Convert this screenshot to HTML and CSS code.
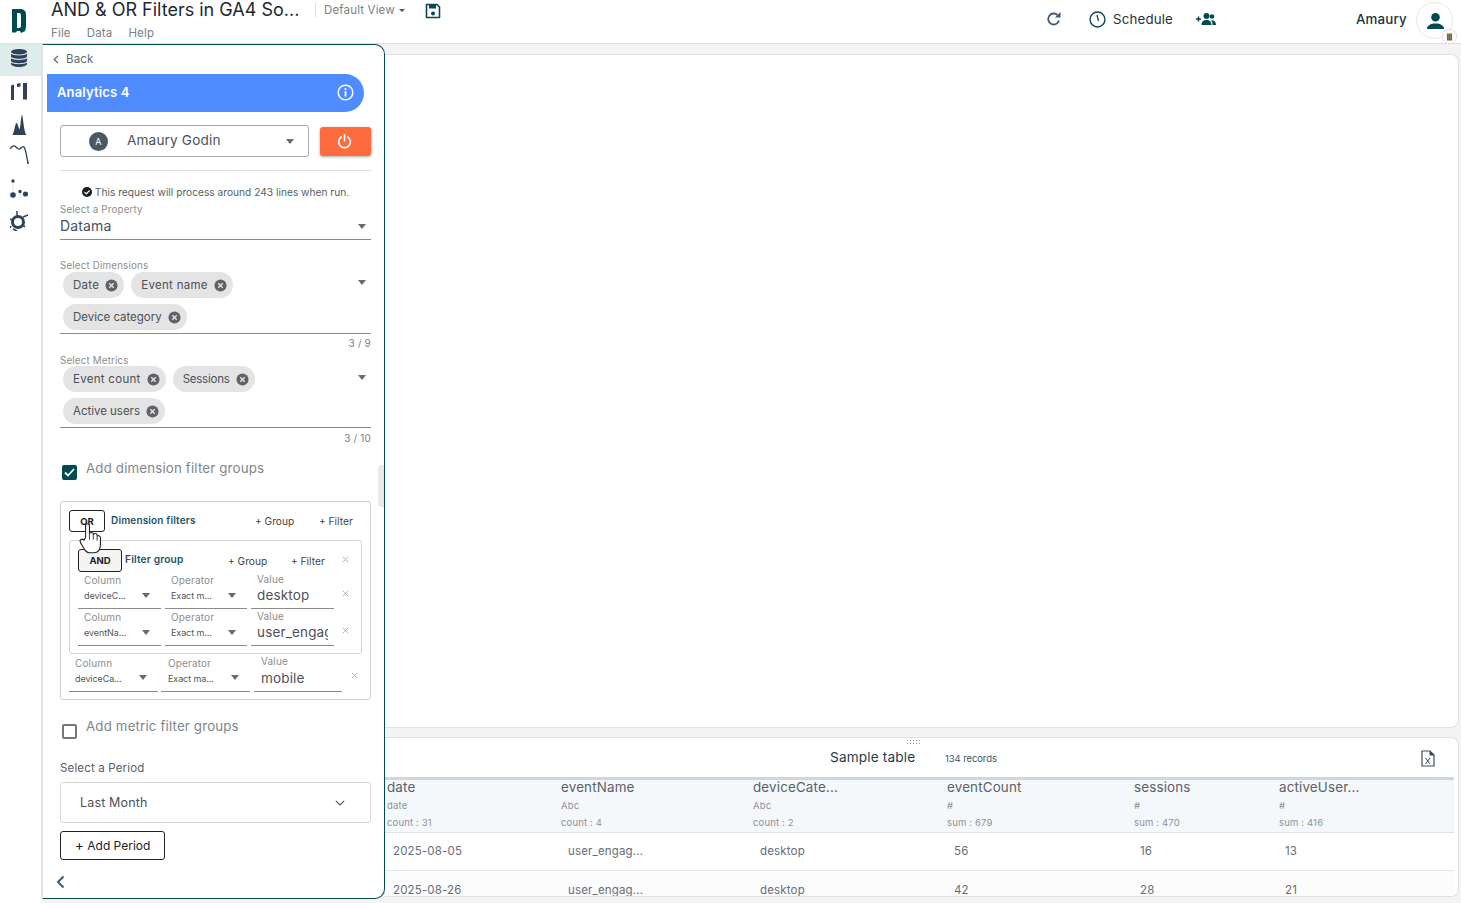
FILE: index.html
```html
<!DOCTYPE html>
<html lang="en">
<head>
<meta charset="utf-8">
<title>AND & OR Filters in GA4</title>
<link rel="stylesheet" href="styles.css">
</head>
<body>
<svg width="0" height="0" class="defs">
  <symbol id="chipx" viewBox="0 0 14 14"><circle cx="7" cy="7" r="6.5" fill="#5f6368"/><path d="M4.6 4.6l4.8 4.8M9.4 4.6l-4.8 4.8" stroke="#e4e4e4" stroke-width="1.5"/></symbol>
  <symbol id="closex" viewBox="0 0 8 8"><path d="M1 1l6 6M7 1l-6 6" stroke="#a8a8a8" stroke-width="1"/></symbol>
</svg>
<header class="topbar">
  <div class="logo-cell">
    <svg class="logo" viewBox="0 0 14 24"><path fill="#004b4f" d="M0 0h8c4 0 6 2 6 6v11c0 3-1 6-3 6l-2 1-1-2H5l-1 1.500H0zM5 4v15h2c1.500 0 2-1 2-2.500V6.500C9 5 8.500 4 7 4z"/></svg>
  </div>
  <div class="title-block">
    <div class="doc-title">AND &amp; OR Filters in GA4 So...</div>
    <nav class="menu"><span>File</span><span>Data</span><span>Help</span></nav>
  </div>
  <div class="view-switch">Default View <i class="mini-caret"></i></div>
  <svg class="save" viewBox="0 0 16 16"><path d="M1.500 1.500h10.500l2.500 2.500v10.500H1.500z" fill="#fff" stroke="#0f4358" stroke-width="1.600" stroke-linejoin="round"/><rect x="4" y="2" width="7" height="3.500" fill="#0f4358"/><circle cx="8" cy="10.500" r="2" fill="#0f4358"/></svg>
  <div class="actions">
    <svg class="refresh" viewBox="0 0 16 16"><path d="M13 9.500A5.500 5.500 0 1 1 11.500 4" fill="none" stroke="#3f5a72" stroke-width="1.800"/><path d="M9 6.500h5.500V1z" fill="#3f5a72"/></svg>
    <svg class="clock" viewBox="0 0 16 16"><circle cx="8" cy="8" r="7" fill="none" stroke="#0f4358" stroke-width="1.300"/><path d="M7.500 3.800l1.500 5.600" stroke="#0f4358" stroke-width="1.200" fill="none"/></svg>
    <span class="schedule">Schedule</span>
    <svg class="share" viewBox="0 0 20 14"><path d="M0 7h5M2.500 4.500v5" stroke="#004b4f" stroke-width="1.500"/><circle cx="10.500" cy="4" r="3" fill="#004b4f"/><circle cx="16" cy="4.500" r="2.300" fill="#004b4f"/><path d="M5.500 13c0-3.500 2-5 5-5s5 1.500 5 5zM16.500 13c0-2-.5-3.500-1.500-4.700 3-.3 5 1.200 5 4.700z" fill="#004b4f"/></svg>
    <span class="user-name">Amaury</span>
    <div class="avatar">
      <svg viewBox="0 0 20 20"><circle cx="10" cy="5.500" r="4.500" fill="#004b4f"/><path d="M1 18c0-4 4-6 9-6s9 2 9 6z" fill="#004b4f"/></svg>
      <span class="badge"><svg viewBox="0 0 8 8"><path d="M1 0h6v8H1z" fill="#5a6570"/><path d="M2 1.500h1.300M4.700 1.500H6M2 3.500h1.300M4.700 3.500H6M2 5.500h1.300M4.700 5.500H6" stroke="#e8b64c" stroke-width=".8"/></svg></span>
    </div>
  </div>
</header>

<div class="workspace">
  <aside class="rail">
    <div class="rail-cell active"><svg width="16" height="18" viewBox="0 0 16 18"><ellipse cx="8" cy="2.800" rx="8" ry="2.800" fill="#2f4257"/><path d="M0 4.800c2 2.300 14 2.300 16 0v2.700c-1 3-15 3-16 0zM0 9.300c2 2.300 14 2.300 16 0v2.700c-1 3-15 3-16 0zM0 13.400c2 2.300 14 2.300 16 0V15c-1 4-15 4-16 0z" fill="#2f4257"/></svg></div>
    <div class="rail-cell second-cell"><svg width="16" height="17" viewBox="0 0 16 17"><path d="M0 2.500l3-1V17H0zM6 .8L9.500 0v3.500L6 4zM12 0h4v16.500h-4z" fill="#2f4257"/></svg></div>
    <div class="rail-cell"><svg width="15" height="20" viewBox="0 0 15 20"><path d="M0 20C2 20 3 8 4.500 8S6.500 14 7.500 14 9 0 10 0s2 20 5 20z" fill="#2f4257"/></svg></div>
    <div class="rail-cell"><svg width="20" height="20" viewBox="0 0 20 20"><path d="M1 5C3 2 5 1 7 3s3 3 5 1 3-2 4 1 2 9 3 14" fill="none" stroke="#2f4257" stroke-width="1.300"/><circle cx="18.800" cy="19" r="1" fill="#2f4257"/></svg></div>
    <div class="rail-cell"><svg width="18" height="20" viewBox="0 0 18 20"><path d="M3 2v17M10 10v9" stroke="#d5dadf" stroke-width=".8"/><circle cx="3" cy="2" r="1.700" fill="#2f4257"/><circle cx="3" cy="16" r="2.800" fill="#2f4257"/><circle cx="10" cy="12.500" r="1.700" fill="#2f4257"/><circle cx="15.500" cy="15" r="2.600" fill="#2f4257"/></svg></div>
    <div class="rail-cell"><svg width="18" height="20" viewBox="0 0 18 20"><circle cx="8" cy="11" r="5.500" fill="none" stroke="#2f4257" stroke-width="3"/><path d="M7 0v5M13 6l5-2M1 15l-1 2M3 18l4 2M13 14l2 2M0 8l2 1" stroke="#2f4257" stroke-width="1.500"/></svg></div>
  </aside>

  <section class="panel">
    <div class="back"><svg width="6" height="9" viewBox="0 0 6 9"><path d="M5 .8L1.200 4.500 5 8.200" fill="none" stroke="#556" stroke-width="1.100"/></svg><span>Back</span></div>
    <div class="connector">
      <span>Analytics 4</span>
      <svg width="17" height="17" viewBox="0 0 17 17"><circle cx="8.500" cy="8.500" r="7.300" fill="none" stroke="#fff" stroke-width="1.500"/><path d="M7.600 7.300h1.800v5.200H7.600zM7.600 4.200h1.800V6H7.600z" fill="#fff"/></svg>
    </div>
    <div class="account-row">
      <div class="account">
        <span class="account-avatar">A</span>
        <span class="account-name">Amaury Godin</span>
        <i class="caret"></i>
      </div>
      <button class="power"><svg width="15" height="15" viewBox="0 0 14 14"><path d="M4 2.800a5.500 5.500 0 1 0 6 0" fill="none" stroke="#fff" stroke-width="1.600" stroke-linecap="round"/><path d="M7 .8v5.400" stroke="#fff" stroke-width="1.600" stroke-linecap="round"/></svg></button>
    </div>
    <hr class="rule">
    <p class="notice"><svg width="10" height="10" viewBox="0 0 10 10"><circle cx="5" cy="5" r="5" fill="#111d20"/><path d="M2.500 5l1.800 1.800 3.300-3.300" fill="none" stroke="#fff" stroke-width="1.200"/></svg> This request will process around 243 lines when run.</p>
    <div class="field property">
      <label>Select a Property</label>
      <div class="value-line">Datama<i class="caret"></i></div>
    </div>
    <div class="field multi dims">
      <label>Select Dimensions</label>
      <i class="caret"></i>
      <div class="chips">
        <span class="chip wide">Date<svg><use href="#chipx"/></svg></span>
        <span class="chip wide">Event name<svg><use href="#chipx"/></svg></span>
        <span class="chip tight">Device category<svg><use href="#chipx"/></svg></span>
      </div>
    </div>
    <div class="counter">3 / 9</div>
    <div class="field multi metrics">
      <label>Select Metrics</label>
      <i class="caret"></i>
      <div class="chips">
        <span class="chip wide">Event count<svg><use href="#chipx"/></svg></span>
        <span class="chip tighter">Sessions<svg><use href="#chipx"/></svg></span>
        <span class="chip tight">Active users<svg><use href="#chipx"/></svg></span>
      </div>
    </div>
    <div class="counter last">3 / 10</div>
    <div class="check-row first"><span class="box checked"><svg width="11" height="9" viewBox="0 0 11 9"><path d="M1 4.500l3 3 6-6.500" fill="none" stroke="#fff" stroke-width="1.800"/></svg></span><span class="check-text">Add dimension filter groups</span></div>

    <div class="filters">
      <div class="filter-head outer">
        <button class="logic or">OR</button>
        <span class="filter-title">Dimension filters</span>
        <span class="add g">+ Group</span>
        <span class="add f">+ Filter</span>
      </div>
      <div class="group">
        <div class="filter-head inner">
          <button class="logic and">AND</button>
          <span class="filter-title">Filter group</span>
          <span class="add g">+ Group</span>
          <span class="add f">+ Filter</span>
          <svg class="close"><use href="#closex"/></svg>
        </div>
        <div class="cond">
          <div class="c-cell"><label>Column</label><div class="c-sel">deviceC...<i class="caret"></i></div></div>
          <div class="c-cell"><label>Operator</label><div class="c-sel">Exact m...<i class="caret"></i></div></div>
          <div class="c-cell val"><label>Value</label><div class="c-val">desktop</div></div>
          <svg class="close"><use href="#closex"/></svg>
        </div>
        <div class="cond">
          <div class="c-cell"><label>Column</label><div class="c-sel">eventNa...<i class="caret"></i></div></div>
          <div class="c-cell"><label>Operator</label><div class="c-sel">Exact m...<i class="caret"></i></div></div>
          <div class="c-cell val"><label>Value</label><div class="c-val clip">user_engagement</div></div>
          <svg class="close"><use href="#closex"/></svg>
        </div>
      </div>
      <div class="cond outer-cond">
        <div class="c-cell"><label>Column</label><div class="c-sel">deviceCa...<i class="caret"></i></div></div>
        <div class="c-cell"><label>Operator</label><div class="c-sel">Exact ma...<i class="caret"></i></div></div>
        <div class="c-cell val"><label>Value</label><div class="c-val">mobile</div></div>
        <svg class="close"><use href="#closex"/></svg>
      </div>
      <svg class="hand" viewBox="0 0 20 30"><path d="M6 14V3.500C6 1 9.500 1 9.500 3.500V11c0-2 3.500-2 3.500 0v1c0-2 3.500-2 3.500 0v1.500c0-1.500 3-1.500 3 .5v6c0 5-2 8-6 8H10C6 28 5 25 1.500 19c-1.500-3 1-4.500 3-2.500z" fill="#fff" stroke="#222" stroke-width="1"/><path d="M9.500 11v5M13 12v4M16.500 13.500V17" stroke="#222" stroke-width=".8"/></svg>
    </div>

    <div class="check-row second"><span class="box"></span><span class="check-text">Add metric filter groups</span></div>
    <div class="period-label">Select a Period</div>
    <div class="period"><span>Last Month</span><svg width="10" height="6" viewBox="0 0 10 6"><path d="M.8.8L5 5 9.200.8" fill="none" stroke="#555" stroke-width="1.200"/></svg></div>
    <button class="add-period"><span class="plus">+</span> Add Period</button>
    <svg class="collapse" width="9" height="14" viewBox="0 0 9 14"><path d="M7.500 1.500L2 7l5.500 5.500" fill="none" stroke="#3f5a72" stroke-width="2"/></svg>
    <span class="grip"></span>
  </section>

  <main class="content">
    <div class="chart-card"></div>
    <div class="table-card">
      <span class="dots"></span>
      <div class="table-top">
        <span class="table-title">Sample table</span>
        <span class="records">134 records</span>
        <svg class="xls" width="14" height="17" viewBox="0 0 14 17"><path d="M1 1h8l4 4v11H1z" fill="#fff" stroke="#3f4a55" stroke-width="1.200"/><path d="M9 1v4h4" fill="#3f4a55" stroke="#3f4a55"/><path d="M4.500 8l4.500 6M9 8l-4.500 6" stroke="#3f4a55" stroke-width="1"/></svg>
      </div>
      <div class="grid head">
        <div><b>date</b><small>date</small><small>count : 31</small></div>
        <div><b>eventName</b><small>Abc</small><small>count : 4</small></div>
        <div><b>deviceCate...</b><small>Abc</small><small>count : 2</small></div>
        <div><b>eventCount</b><small>#</small><small>sum : 679</small></div>
        <div><b>sessions</b><small>#</small><small>sum : 470</small></div>
        <div><b>activeUser...</b><small>#</small><small>sum : 416</small></div>
      </div>
      <div class="grid row">
        <div>2025-08-05</div><div>user_engag...</div><div>desktop</div><div>56</div><div>16</div><div>13</div>
      </div>
      <div class="grid row">
        <div>2025-08-26</div><div>user_engag...</div><div>desktop</div><div>42</div><div>28</div><div>21</div>
      </div>
    </div>
  </main>
</div>
</body>
</html>
```

FILE: styles.css
```css
* { box-sizing: border-box; }
html, body { margin: 0; height: 903px; overflow: hidden; }
body { font-family: Inter, "Noto Sans", sans-serif; color: #3d4a57; background: #fff; letter-spacing: .01em; }
.defs { position: absolute; }
button { font-family: inherit; padding: 0; }
label { display: block; }

.topbar { height: 44px; display: flex; border-bottom: 1px solid #dfe2e5; background: #fff; position: relative; }
.logo-cell { width: 42px; padding: 9px 0 0 12px; }
.logo { width: 14px; height: 24px; display: block; }
.title-block { margin-left: 9px; width: 264px; padding-top: 1px; }
.doc-title { font-size: 18px; line-height: 18px; color: #1d2833; letter-spacing: 0; }
.menu { display: flex; gap: 16px; margin-top: 7px; font-size: 11.500px; line-height: 14px; color: #7a7f85; }
.view-switch { margin: 3px 0 0 0; height: 14px; border-left: 1px solid #ddd; padding-left: 8px; font-size: 11.500px; line-height: 14px; color: #7b8087; width: 110px; white-space: nowrap; }
.mini-caret { display: inline-block; border: 3px solid transparent; border-top: 3px solid #555; border-bottom: 0; vertical-align: 2px; margin-left: 1px; }
.save { width: 16px; height: 16px; margin: 3px 0 0 0; }
.actions { position: absolute; left: 1046px; top: 0; right: 0; height: 43px; display: flex; align-items: center; padding-bottom: 5px; }
.refresh { width: 16px; height: 16px; }
.clock { width: 17px; height: 17px; margin-left: 27px; }
.schedule { font-size: 13.300px; margin-left: 7px; color: #25323e; width: 64px; }
.share { width: 20px; height: 14px; margin-left: 19px; }
.user-name { font-size: 13.300px; font-weight: 500; color: #1d3340; margin-left: 140px; width: 60px; }
.avatar { position: relative; width: 37px; height: 37px; border: 1px solid #e8e8e8; border-radius: 50%; padding: 9px; margin-top: 3px; }
.avatar > svg { width: 19px; height: 19px; display: block; }
.badge { position: absolute; right: -5px; bottom: -6px; width: 15px; height: 15px; border-radius: 50%; background: #fff; border: 1px dotted #bbb; padding: 3px; }
.badge svg { display: block; width: 7px; height: 8px; }

.workspace { display: flex; height: 859px; background: #f4f4f4; }
.rail { width: 42px; height: 859px; background: #fff; display: grid; grid-template-rows: 32px 32px 34px 24px 46px 18px; align-content: start; justify-items: center; }
.rail-cell { width: 100%; display: flex; align-items: center; justify-content: center; padding-right: 4px; }
.rail-cell.active { background: #deedeb; padding-bottom: 4px; }
.rail-cell.second-cell { padding-bottom: 2px; }

.panel { position: relative; width: 343px; height: 855px; background: #fff; border: 1px solid #004b4f; border-left: 1px solid #e2e2e2; border-radius: 0 10px 10px 0; flex: none; padding: 0 13px 0 17px; box-shadow: -1px 0 0 #e2e2e2; }
.back { display: flex; align-items: center; gap: 7px; height: 14px; margin: 7px 0 0 -7px; font-size: 11.500px; color: #5f6b76; }
.connector { height: 38px; margin: 8px 7px 0 -13px; width: 317px; background: #4f8cff; border-radius: 0 19px 19px 0; color: #fff; font-size: 13px; font-weight: 600; display: flex; align-items: center; justify-content: space-between; padding: 0 10px 2px; }
.account-row { display: flex; margin-top: 13px; height: 32px; }
.account { width: 249px; height: 32px; border: 1px solid #a9a9a9; border-radius: 3px; display: flex; align-items: center; position: relative; padding: 0 0 2px 28px; }
.account-avatar { width: 19px; height: 19px; border-radius: 50%; background: #4a5866; color: #fff; font-size: 9px; text-align: center; line-height: 19px; margin-top: 2px; }
.account-name { font-size: 13.600px; margin-left: 19px; color: #4a5158; }
.caret { position: absolute; border: 4.500px solid transparent; border-top: 5px solid #6b6b6b; border-bottom: 0; }
.account .caret { right: 14px; top: 13px; }
.power { width: 51px; height: 29px; margin: 2px 0 0 11px; background: #ff6b3d; border: 0; border-radius: 3px; box-shadow: 0 1px 3px rgba(0,0,0,.35); display: flex; align-items: center; justify-content: center; padding-right: 2px; }
.rule { width: 311px; height: 1px; background: #dedede; border: 0; margin: 13px 0 0; }
.notice { margin: 15px 0 0 22px; height: 12px; font-size: 10.200px; line-height: 12px; color: #555f68; white-space: nowrap; letter-spacing: 0; }
.notice svg { vertical-align: -1px; }
.field { position: relative; width: 311px; border-bottom: 1px solid #8b8b8b; }
.field label { font-size: 9.800px; line-height: 12px; color: #8d8d8d; }
.property { height: 36px; margin-top: 6px; }
.value-line { font-size: 14px; line-height: 18px; color: #49525a; position: relative; margin-top: 1px; }
.value-line .caret { right: 5px; top: 7px; }
.dims { margin-top: 20px; height: 74px; }
.metrics { margin-top: 6px; height: 73px; }
.multi > .caret { right: 5px; top: 20px; }
.chips { display: flex; flex-wrap: wrap; gap: 6px 7px; width: 240px; padding-left: 3px; }
.metrics .chips { margin-top: -1px; }
.chip { height: 26px; border-radius: 13px; background: #e4e4e4; font-size: 11.500px; color: #4d5156; display: inline-flex; align-items: center; gap: 5px; padding: 0 6px 0 10px; white-space: nowrap; }
.chip.wide { letter-spacing: .025em; }
.chip.tight { letter-spacing: -.002em; }
.chip.tighter { letter-spacing: -.02em; }
.chip svg { width: 13px; height: 13px; margin-left: 1px; }
.counter { width: 311px; text-align: right; font-size: 10px; line-height: 12px; height: 12px; margin-top: 3px; color: #7d7d7d; }
.counter.last { margin-top: 4px; }
.check-row { display: flex; font-size: 13.300px; line-height: 17px; color: #80868c; }
.check-row.first { margin-top: 17px; height: 20px; }
.check-row.second { margin-top: 20px; height: 20px; }
.check-row.first .check-text { margin-top: -1px; }
.check-row.second .check-text { margin-top: -2px; }
.box { width: 15px; height: 15px; border: 2px solid #777; border-radius: 2px; margin: 4px 9px 0 2px; display: flex; align-items: center; justify-content: center; }
.box.checked { background: #004b4f; border-color: #004b4f; }

.filters { position: relative; width: 311px; height: 199px; margin-top: 20px; border: 1px solid #cfcfcf; border-radius: 3px; padding: 8px 8px 0; }
.filter-head { display: flex; align-items: flex-start; position: relative; }
.filter-head.outer { height: 30px; }
.filter-head.inner { height: 25px; }
.logic { height: 22px; border-radius: 3px; border: 1px solid #222; background: #fff; font-size: 9.500px; font-weight: 700; color: #222; }
.logic.or { width: 36px; }
.logic.and { width: 44px; height: 23px; background: #f4f4f4; }
.filter-title { font-size: 10px; font-weight: 600; color: #1f5266; margin: 4px 0 0 6px; white-space: nowrap; }
.inner .filter-title { margin-left: 3px; font-size: 10.200px; }
.add { position: absolute; top: 5px; font-size: 10.200px; color: #444; white-space: nowrap; letter-spacing: 0; }
.outer .add.g { left: 186px; }
.outer .add.f { left: 250px; }
.inner .add.g { left: 150px; top: 6px; }
.inner .add.f { left: 213px; top: 6px; }
.close { width: 7px; height: 7px; }
.inner .close { position: absolute; left: 264px; top: 7px; }
.group { width: 293px; height: 114px; border: 1px solid #d4d4d4; border-radius: 3px; padding: 8px 8px 0; }
.cond { display: grid; grid-template-columns: 83px 82px 83px 16px; column-gap: 4px; height: 37px; position: relative; }
.c-cell { position: relative; border-bottom: 1px solid #8b8b8b; height: 35px; padding-left: 6px; }
.c-cell label { font-size: 10px; line-height: 12px; color: #8d8d8d; }
.c-sel { font-size: 9px; line-height: 12px; color: #555; margin-top: 4px; letter-spacing: -.01em; white-space: nowrap; }
.c-sel .caret { right: 11px; top: 19px; }
.c-cell.val label { margin-top: -1px; }
.c-val { font-size: 13.500px; line-height: 18px; color: #4c5258; margin-top: 1px; overflow: hidden; white-space: nowrap; width: 71px; }
.cond > .close { margin: 16px 0 0 4px; }
.outer-cond { grid-template-columns: 89px 89px 89px 16px; column-gap: 3px; margin-top: 2px; height: 37px; }
.outer-cond .c-cell { height: 36px; }
.outer-cond .c-cell label { padding-top: 1px; }
.outer-cond .c-cell.val { margin-left: 1px; }
.outer-cond .c-cell.val label { padding-top: 0; }
.outer-cond .c-cell + .c-cell { padding-left: 7px; }
.outer-cond .c-val { margin-top: 2px; }
.outer-cond > .close { margin-left: 6px; }
.hand { position: absolute; left: 17px; top: 20px; width: 24px; height: 33px; }

.period-label { margin-top: 21px; font-size: 11.500px; line-height: 14px; color: #566069; }
.period { width: 311px; height: 41px; margin-top: 7px; border: 1px solid #d8d8d8; border-radius: 3px; padding: 0 25px 0 19px; display: flex; align-items: center; justify-content: space-between; font-size: 12.500px; color: #4c5258; }
.add-period { display: block; width: 105px; height: 29px; margin-top: 8px; background: #fff; border: 1px solid #222; border-radius: 3px; font-size: 12px; color: #222; white-space: nowrap; padding-bottom: 2px; }
.plus { font-size: 14px; }
.collapse { position: absolute; left: 13px; bottom: 9px; }
.grip { position: absolute; right: 0; top: 420px; width: 6px; height: 42px; background: #e8e8e8; border-radius: 4px 0 0 4px; }

.content { flex: 1; min-width: 0; padding: 10px 2px 0 0; }
.chart-card { height: 674px; background: #fff; border: 1px solid #dde1e4; border-left: 0; border-radius: 0 8px 8px 0; }
.table-card { position: relative; height: 160px; margin-top: 9px; background: #fff; border: 1px solid #dde1e4; border-left: 0; border-radius: 0 8px 8px 0; overflow: hidden; padding-right: 4px; }
.dots { position: absolute; left: 521px; top: 1px; width: 15px; height: 6px; background-image: radial-gradient(circle at center, #8f959a .6px, transparent .9px); background-size: 3px 3px; }
.table-top { height: 39px; position: relative; }
.table-title { position: absolute; left: 445px; top: 11px; font-size: 13.600px; line-height: 17px; color: #1f3d4d; }
.records { position: absolute; left: 560px; top: 15px; font-size: 9.500px; line-height: 12px; color: #3f5563; letter-spacing: -.01em; }
.xls { position: absolute; right: 19px; top: 12px; }
.grid { display: grid; grid-template-columns: 175px 192px 194px 186px 145px 1fr; }
.head { grid-template-columns: 174px 192px 194px 187px 145px 1fr; height: 56px; background: #f4f8fb; border-top: 3px solid #cfd6dc; border-bottom: 1px solid #dde1e4; padding-left: 2px; }
.head b { display: block; font-weight: 400; font-size: 13.400px; line-height: 14px; color: #5c6166; }
.head small { display: block; font-size: 9.500px; line-height: 12px; margin-top: 6px; color: #8d9296; }
.head small + small { margin-top: 5px; }
.row { height: 38px; border-bottom: 1px solid #e3e6e8; padding: 10px 0 0 8px; font-size: 11.500px; line-height: 16px; color: #666d78; background: #fff; }
.row + .row { background: #fcfcfc; padding-top: 11px; }
```
